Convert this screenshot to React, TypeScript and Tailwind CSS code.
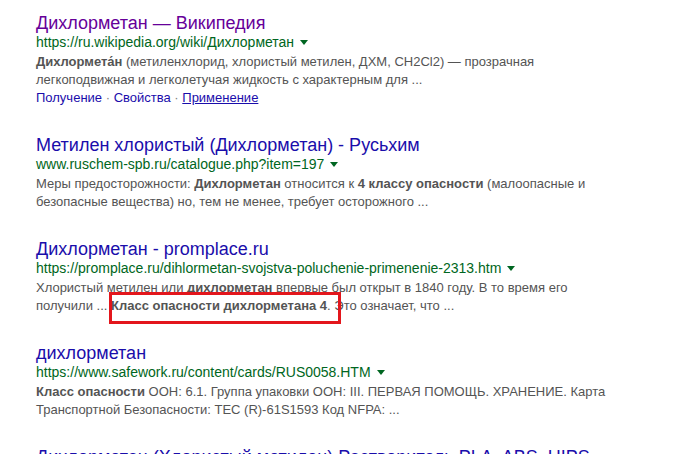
import React from "react";

const Arrow = () => (
  <span className="ml-[6px] inline-block h-0 w-0 align-middle border-x-[4px] border-t-[5px] border-x-transparent border-t-[#006621] relative top-[-1px]" />
);

type R = {
  title: string;
  visited?: boolean;
  url: string;
  lines: React.ReactNode[];
  links?: boolean;
};

const B = ({ children }: { children: React.ReactNode }) => (
  <b className="font-bold text-[#545454]">{children}</b>
);

const results: R[] = [
  {
    title: "Дихлорметан — Википедия",
    visited: true,
    url: "https://ru.wikipedia.org/wiki/Дихлорметан",
    lines: [
      <>
        <B>Дихлормета́н</B> (метиленхлорид, хлористый метилен, ДХМ, CH2Cl2) — прозрачная
      </>,
      <>легкоподвижная и легколетучая жидкость с характерным для ...</>,
    ],
    links: true,
  },
  {
    title: "Метилен хлористый (Дихлорметан) - Русьхим",
    url: "www.ruschem-spb.ru/catalogue.php?item=197",
    lines: [
      <>
        Меры предосторожности: <B>Дихлорметан</B> относится к <B>4</B> <B>классу опасности</B> (малоопасные и
      </>,
      <>безопасные вещества) но, тем не менее, требует осторожного ...</>,
    ],
  },
  {
    title: "Дихлорметан - promplace.ru",
    url: "https://promplace.ru/dihlormetan-svojstva-poluchenie-primenenie-2313.htm",
    lines: [
      <>
        Хлористый метилен или <B>дихлорметан</B> впервые был открыт в 1840 году. В то время его
      </>,
      <>
        получили ... <B>Класс опасности дихлорметана</B> <B>4</B>. Это означает, что ...
      </>,
    ],
  },
  {
    title: "дихлорметан",
    url: "https://www.safework.ru/content/cards/RUS0058.HTM",
    lines: [
      <>
        <B>Класс опасности</B> ООН: 6.1. Группа упаковки ООН: III. ПЕРВАЯ ПОМОЩЬ. ХРАНЕНИЕ. Карта
      </>,
      <>Транспортной Безопасности: TEC (R)-61S1593 Код NFPA: ...</>,
    ],
  },
  {
    title: "Дихлорметан (Хлористый метилен) Растворитель PLA, ABS, HIPS",
    url: "https://3dvision.su/",
    lines: [<>...</>],
  },
];

export default function App() {
  return (
    <div
      className="relative h-[454px] w-[689px] overflow-hidden bg-white pl-[36px] pt-[13px]"
      style={{ fontFamily: '"Liberation Sans", Arial, sans-serif' }}
    >
      <div className="flex flex-col gap-[28px]">
        {results.map((r, i) => (
          <div key={i} className="flex flex-col">
            <div
              className={`whitespace-nowrap text-[18px] leading-[20px] ${
                r.visited ? "text-[#660099]" : "text-[#1a0dab]"
              }`}
            >
              {r.title}
            </div>
            <div className="whitespace-nowrap text-[14px] leading-[18px] text-[#006621]">
              {r.url}
              <Arrow />
            </div>
            <div className="mt-[2px] flex flex-col text-[13px] leading-[18px] text-[#545454]">
              {r.lines.map((l, j) => (
                <div key={j} className="whitespace-nowrap">
                  {l}
                </div>
              ))}
              {r.links && (
                <div className="whitespace-nowrap">
                  <span className="text-[#1a0dab]">Получение</span>
                  <span className="text-[#808080]"> · </span>
                  <span className="text-[#1a0dab]">Свойства</span>
                  <span className="text-[#808080]"> · </span>
                  <span className="text-[#1a0dab] underline">Применение</span>
                </div>
              )}
            </div>
          </div>
        ))}
      </div>
      <div className="absolute left-[109px] top-[292px] h-[32px] w-[232px] border-[3px] border-[#e3161c]" />
    </div>
  );
}
